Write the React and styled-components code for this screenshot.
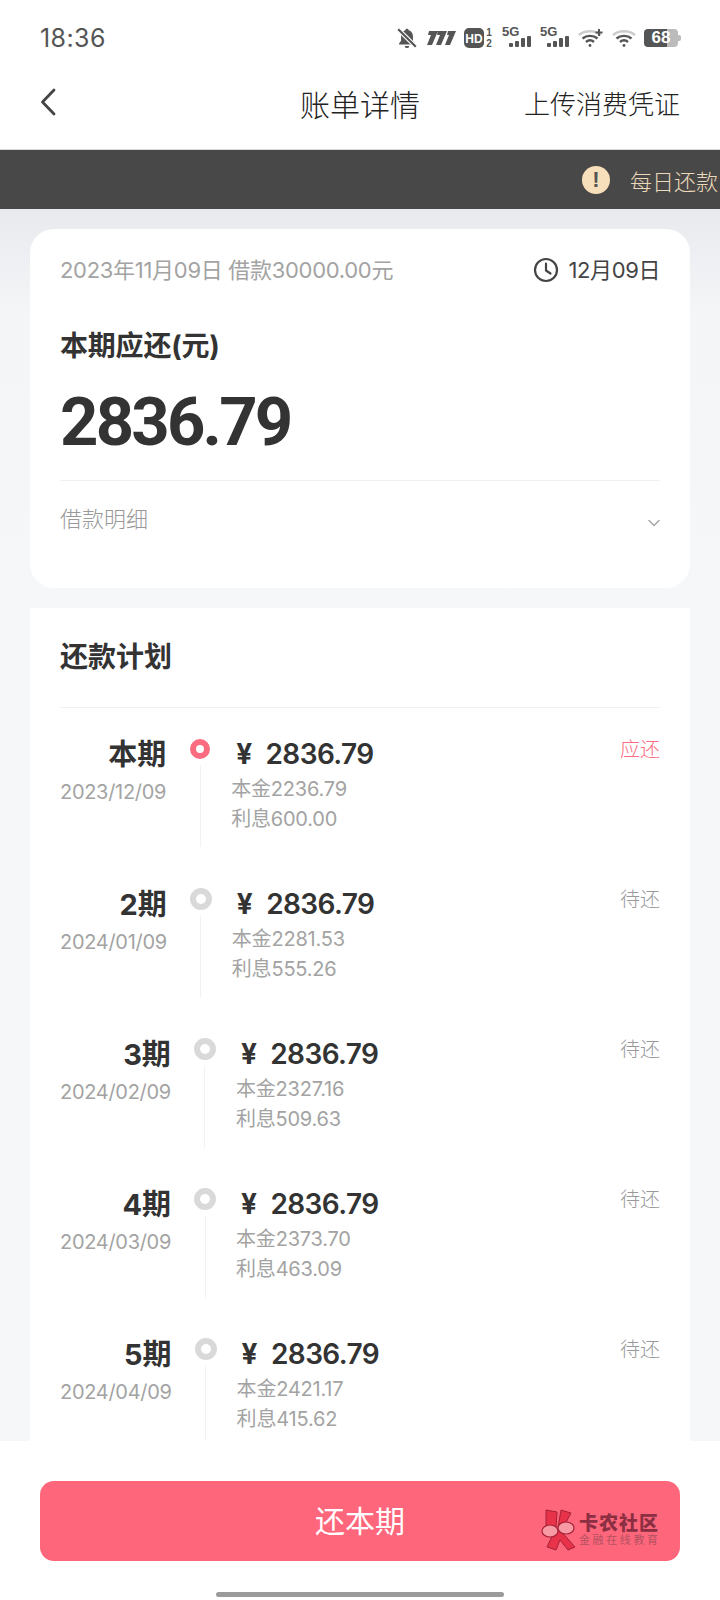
import React from 'react';
import styled, { createGlobalStyle } from 'styled-components';

const FONT = `Inter, "Noto Sans CJK SC", sans-serif`;

const GlobalStyle = createGlobalStyle`
  html, body {
    margin: 0;
    padding: 0;
    background: #fff;
  }
  * { box-sizing: border-box; }
`;

const Page = styled.div`
  position: relative;
  width: 720px;
  height: 1600px;
  overflow: hidden;
  display: flex;
  flex-direction: column;
  font-family: ${FONT};
  background: #f6f7f9;
`;

// Status bar
const StatusBar = styled.div`
  height: 70px;
  flex: none;
  background: #fff;
  display: flex;
  align-items: center;
  padding: 5px 40px 0;
`;

const Clock = styled.div`
  font-size: 25px;
  color: #555;
  letter-spacing: 0.4px;
`;

const StatusIcons = styled.div`
  margin-left: auto;
  display: flex;
  align-items: center;
  gap: 8px;
  color: #555;
`;

const SignalWrap = styled.div`
  width: 30px;
  height: 22px;
  position: relative;
`;

const SignalLabel = styled.span`
  position: absolute;
  left: 0;
  top: -3px;
  font-size: 13px;
  line-height: 15px;
  font-weight: 700;
  font-family: "Liberation Sans", sans-serif;
`;

const BatteryBox = styled.div`
  width: 34px;
  height: 18px;
  border-radius: 4px;
  background: linear-gradient(90deg, #555 0 68%, #bbb 68% 100%);
  color: #fff;
  font-size: 17px;
  font-weight: 700;
  line-height: 18px;
  text-align: center;
  font-family: "Liberation Sans", sans-serif;
  position: relative;
  margin-right: 2px;

  &::after {
    content: '';
    position: absolute;
    right: -3px;
    top: 6px;
    width: 3px;
    height: 6px;
    border-radius: 0 2px 2px 0;
    background: #bbb;
  }
`;

// Navigation
const NavBar = styled.div`
  height: 80px;
  flex: none;
  background: #fff;
  position: relative;
  display: flex;
  justify-content: space-between;
  padding: 12px 40px 0;
  border-bottom: 1px solid #d8d8d8;
`;

const NavBack = styled.div`
  display: flex;
  margin-top: 6px;
`;

const NavTitle = styled.div`
  position: absolute;
  left: 0;
  right: 0;
  top: 11px;
  text-align: center;
  font-size: 30px;
  font-weight: 300;
  color: #222;
  pointer-events: none;
`;

const NavAction = styled.div`
  font-size: 26px;
  font-weight: 300;
  color: #222;
  margin-top: 2px;
`;

// Notice strip, text runs off the right edge
const Notice = styled.div`
  height: 59px;
  flex: none;
  background: #484848;
  display: flex;
  align-items: center;
  padding-left: 582px;
  gap: 20px;
  overflow: hidden;
  white-space: nowrap;
`;

const NoticeBadge = styled.div`
  width: 28px;
  height: 28px;
  flex: none;
  border-radius: 50%;
  background: #f7dfbb;
  color: #555;
  font-family: "Liberation Sans", sans-serif;
  font-size: 22px;
  font-weight: 700;
  line-height: 28px;
  text-align: center;
`;

const NoticeText = styled.div`
  font-size: 22px;
  font-weight: 300;
  color: #ecd9b9;
`;

const Content = styled.div`
  flex: 1;
  min-height: 0;
  overflow: hidden;
  padding: 20px 30px 0;
  display: flex;
  flex-direction: column;
  gap: 20px;
  background: linear-gradient(#e9eaee 0, #f4f5f7 100px, #f6f7f9 400px);
`;

// Bill summary card
const SummaryCard = styled.div`
  height: 359px;
  flex: none;
  background: #fff;
  border-radius: 24px;
  padding: 23px 30px 0;
`;

const MetaRow = styled.div`
  display: flex;
  justify-content: space-between;
  align-items: center;
  height: 32px;
`;

const MetaText = styled.div`
  font-size: 22px;
  color: #a3a3a3;
  letter-spacing: -0.3px;
`;

const DueDate = styled.div`
  display: flex;
  align-items: center;
  gap: 10px;
  font-size: 22px;
  color: #444;
  letter-spacing: -0.4px;
`;

const DueClock = styled.div`
  display: flex;
  margin-top: 3px;
`;

const SummaryLabel = styled.div`
  margin-top: 42px;
  height: 40px;
  line-height: 40px;
  font-size: 28px;
  font-weight: 700;
  color: #333;
  letter-spacing: -0.2px;
`;

const SummaryAmount = styled.div`
  margin-top: 16px;
  height: 80px;
  line-height: 80px;
  font-family: Roboto, sans-serif;
  font-size: 67px;
  font-weight: 700;
  color: #333;
  letter-spacing: -2.8px;
`;

const Divider = styled.div`
  height: 1px;
  background: #f0f0f0;
`;

const SummaryDivider = styled(Divider)`
  margin-top: 18px;
`;

const DetailRow = styled.div`
  height: 72px;
  display: flex;
  justify-content: space-between;
  align-items: center;
  font-size: 22px;
  font-weight: 300;
  color: #999;
`;

const DetailChevron = styled.div`
  display: flex;
  margin-top: 12px;
`;

// Repayment plan card
const PlanCard = styled.div`
  flex: 1;
  background: #fff;
  padding: 0 30px;
`;

const PlanTitle = styled.div`
  height: 99px;
  line-height: 98px;
  font-size: 28px;
  font-weight: 700;
  color: #333;
`;

const PlanRows = styled.div`
  padding-top: 25px;
`;

const PlanRow = styled.div`
  height: 150px;
  display: flex;
  align-items: flex-start;
`;

const TermCol = styled.div`
  flex: none;
  text-align: right;
`;

const TermName = styled.div`
  height: 43px;
  line-height: 44px;
  font-size: 29px;
  font-weight: 700;
  color: #333;
`;

const TermDate = styled.div`
  margin-top: 2px;
  font-size: 20px;
  line-height: 28px;
  letter-spacing: -0.3px;
  color: #a3a3a3;
`;

const TrackCol = styled.div`
  flex: none;
  width: 22px;
  margin: 6px 0 0 23px;
  display: flex;
  flex-direction: column;
  align-items: center;
  gap: 6px;
`;

const TrackDot = styled.div`
  width: ${p => (p.$active ? 20 : 22)}px;
  height: ${p => (p.$active ? 20 : 22)}px;
  margin-top: ${p => (p.$active ? 0 : -1)}px;
  border-radius: 50%;
  background: #fff;
  border: 6px solid ${p => (p.$active ? '#fb6c80' : '#d9d9d9')};
`;

const TrackLine = styled.div`
  width: 1px;
  height: 82px;
  background: #f2f2f2;
`;

const AmountCol = styled.div`
  flex: 1;
  margin-left: 20px;
`;

const RowAmount = styled.div`
  height: 42px;
  line-height: 42px;
  padding-left: 5px;
  font-size: 28px;
  font-weight: 600;
  color: #333;
  display: flex;
  letter-spacing: -0.6px;
`;

const Currency = styled.span`
  font-weight: 700;
  margin-right: 14px;
`;

const RowSub = styled.div`
  font-size: 20px;
  line-height: 29.5px;
  letter-spacing: -0.2px;
  color: #a3a3a3;
`;

const RowStatus = styled.div`
  margin-top: 2px;
  font-size: 20px;
  line-height: 30px;
  font-weight: 300;
  color: ${p => (p.$active ? '#fb6c80' : '#999')};
`;

// Pay button footer
const Footer = styled.div`
  position: absolute;
  left: 0;
  right: 0;
  bottom: 0;
  height: 159px;
  background: #fff;
  padding: 40px 40px 0;
`;

const PayButton = styled.div`
  position: relative;
  height: 80px;
  border-radius: 14px;
  background: #fe667c;
  color: #fff;
  font-size: 30px;
  font-weight: 400;
  line-height: 80px;
  text-align: center;
`;

const Watermark = styled.div`
  position: absolute;
  left: 500px;
  top: 31px;
  display: flex;
  align-items: center;
  gap: 3px;
  height: 36px;
`;

const WatermarkText = styled.div`
  display: flex;
  flex-direction: column;
  text-align: left;
`;

const WatermarkName = styled.div`
  font-size: 19px;
  line-height: 21px;
  font-weight: 900;
  letter-spacing: 1px;
  color: #8c2f42;
`;

const WatermarkSub = styled.div`
  font-size: 11px;
  line-height: 13px;
  letter-spacing: 2.600px;
  color: #b4515f;
`;

const HomeBar = styled.div`
  position: absolute;
  left: 216px;
  bottom: 3px;
  width: 288px;
  height: 5px;
  border-radius: 3px;
  background: #9a9a9a;
`;

const MutedBell = () => (
  <svg width="22" height="22" viewBox="0 0 20 20" fill="currentColor">
    <path d="M10 1.5c-.9 0-1.5.6-1.5 1.5C6 3.6 4.6 5.8 4.600 8.400v4.200L2.800 15v1h14.400v-1l-1.800-2.400V8.400C15.400 5.800 14 3.600 11.500 3c0-.9-.6-1.500-1.500-1.500z" />
    <path d="M8 17.200h4a2 2 0 0 1-4 0z" />
    <path d="M2 2l16 16" stroke="#fff" strokeWidth="4" />
    <path d="M2 2l16 16" stroke="currentColor" strokeWidth="2" />
  </svg>
);

const CarrierMark = () => (
  <svg width="30" height="14" viewBox="0 0 30 14" fill="currentColor">
    <path d="M3 0h9L6 14H1l4-10H2zM12 0h9l-6 14h-5l4-10h-3zM22 0h8l-6 14h-5l4-10h-2z" />
  </svg>
);

const HdMark = () => (
  <svg width="30" height="22" viewBox="0 0 30 22">
    <rect x="0" y="1" width="20" height="20" rx="5" fill="currentColor" />
    <text x="10" y="15.500" textAnchor="middle" fontSize="12" fontWeight="700" fill="#fff" fontFamily="Liberation Sans">HD</text>
    <text x="25" y="9" textAnchor="middle" fontSize="10" fontWeight="700" fill="currentColor" fontFamily="Liberation Sans">1</text>
    <text x="25" y="20" textAnchor="middle" fontSize="10" fontWeight="700" fill="currentColor" fontFamily="Liberation Sans">2</text>
  </svg>
);

const Signal = () => (
  <SignalWrap>
    <SignalLabel>5G</SignalLabel>
    <svg width="30" height="22" viewBox="0 0 30 22" fill="currentColor">
      <rect x="7" y="16" width="4" height="4" rx="1" />
      <rect x="13" y="14" width="4" height="6" rx="1" />
      <rect x="19" y="11" width="4" height="9" rx="1" />
      <rect x="25" y="9" width="4" height="11" rx="1" />
    </svg>
  </SignalWrap>
);

const Wifi = ({ plus }) => (
  <svg width={plus ? 26 : 24} height="20" viewBox={plus ? '0 0 26 20' : '0 0 24 20'} fill="none" stroke="currentColor" strokeWidth="2.400">
    <path d="M1 7c6-5 16-5 22 0" stroke="#ccc" />
    <path d="M4.500 10.500c4-3.500 11-3.500 15 0" />
    <path d="M8 14c2.400-2 5.600-2 8 0" />
    <circle cx="12" cy="17.500" r="1.400" fill="currentColor" stroke="none" />
    {plus && <path d="M21 1v7M17.500 4.500h7" strokeWidth="2" />}
  </svg>
);

const BackArrow = () => (
  <svg width="16" height="28" viewBox="0 0 16 28" fill="none" stroke="#444" strokeWidth="2.800" strokeLinecap="round" strokeLinejoin="round">
    <path d="M14 2L2.500 14 14 26" />
  </svg>
);

const ClockIcon = () => (
  <svg width="26" height="26" viewBox="0 0 26 26" fill="none" stroke="#444" strokeWidth="2.200" strokeLinecap="round" strokeLinejoin="round">
    <circle cx="13" cy="13" r="11" />
    <path d="M13 6.500V13.500l4.500 3" />
  </svg>
);

const ChevronDown = () => (
  <svg width="12" height="8" viewBox="0 0 12 8" fill="none" stroke="#aaa" strokeWidth="1.600" strokeLinecap="round" strokeLinejoin="round">
    <path d="M1 1.500l5 5 5-5" />
  </svg>
);

const CommunityLogo = () => (
  <svg width="36" height="44" viewBox="0 0 36 44">
    <path d="M6 2l11 2-1 16-10-1zM21 2l10 3-8 15-5-1z" fill="#e8324a" stroke="#a52238" strokeWidth="1" />
    <path d="M14 24l6-2 15 17-7 3-8-10-4 10-9-3z" fill="#e8324a" stroke="#a52238" strokeWidth="1" />
    <ellipse cx="10" cy="23" rx="8" ry="6" fill="#f79aa3" stroke="#a52238" strokeWidth="1.200" />
    <ellipse cx="26" cy="20" rx="8" ry="6" fill="#f79aa3" stroke="#a52238" strokeWidth="1.200" />
  </svg>
);

const PLAN = [
  { term: '本期', date: '2023/12/09', principal: '2236.79', interest: '600.00', status: '应还', active: true },
  { term: '2期', date: '2024/01/09', principal: '2281.53', interest: '555.26', status: '待还' },
  { term: '3期', date: '2024/02/09', principal: '2327.16', interest: '509.63', status: '待还' },
  { term: '4期', date: '2024/03/09', principal: '2373.70', interest: '463.09', status: '待还' },
  { term: '5期', date: '2024/04/09', principal: '2421.17', interest: '415.62', status: '待还' },
];

function App() {
  return (
    <Page>
      <GlobalStyle />
      <StatusBar>
        <Clock>18:36</Clock>
        <StatusIcons>
          <MutedBell />
          <CarrierMark />
          <HdMark />
          <Signal />
          <Signal />
          <Wifi plus />
          <Wifi />
          <BatteryBox>68</BatteryBox>
        </StatusIcons>
      </StatusBar>

      <NavBar>
        <NavBack>
          <BackArrow />
        </NavBack>
        <NavTitle>账单详情</NavTitle>
        <NavAction>上传消费凭证</NavAction>
      </NavBar>

      <Notice>
        <NoticeBadge>!</NoticeBadge>
        <NoticeText>每日还款</NoticeText>
      </Notice>

      <Content>
        <SummaryCard>
          <MetaRow>
            <MetaText>2023年11月09日 借款30000.00元</MetaText>
            <DueDate>
              <DueClock>
                <ClockIcon />
              </DueClock>
              12月09日
            </DueDate>
          </MetaRow>
          <SummaryLabel>本期应还(元)</SummaryLabel>
          <SummaryAmount>2836.79</SummaryAmount>
          <SummaryDivider />
          <DetailRow>
            借款明细
            <DetailChevron>
              <ChevronDown />
            </DetailChevron>
          </DetailRow>
        </SummaryCard>

        <PlanCard>
          <PlanTitle>还款计划</PlanTitle>
          <Divider />
          <PlanRows>
            {PLAN.map(item => (
              <PlanRow key={item.date}>
                <TermCol>
                  <TermName>{item.term}</TermName>
                  <TermDate>{item.date}</TermDate>
                </TermCol>
                <TrackCol>
                  <TrackDot $active={item.active} />
                  <TrackLine />
                </TrackCol>
                <AmountCol>
                  <RowAmount>
                    <Currency>¥</Currency>
                    2836.79
                  </RowAmount>
                  <RowSub>本金{item.principal}</RowSub>
                  <RowSub>利息{item.interest}</RowSub>
                </AmountCol>
                <RowStatus $active={item.active}>{item.status}</RowStatus>
              </PlanRow>
            ))}
          </PlanRows>
        </PlanCard>
      </Content>

      <Footer>
        <PayButton>
          还本期
          <Watermark>
            <CommunityLogo />
            <WatermarkText>
              <WatermarkName>卡农社区</WatermarkName>
              <WatermarkSub>金融在线教育</WatermarkSub>
            </WatermarkText>
          </Watermark>
        </PayButton>
      </Footer>
      <HomeBar />
    </Page>
  );
}

export default App;
